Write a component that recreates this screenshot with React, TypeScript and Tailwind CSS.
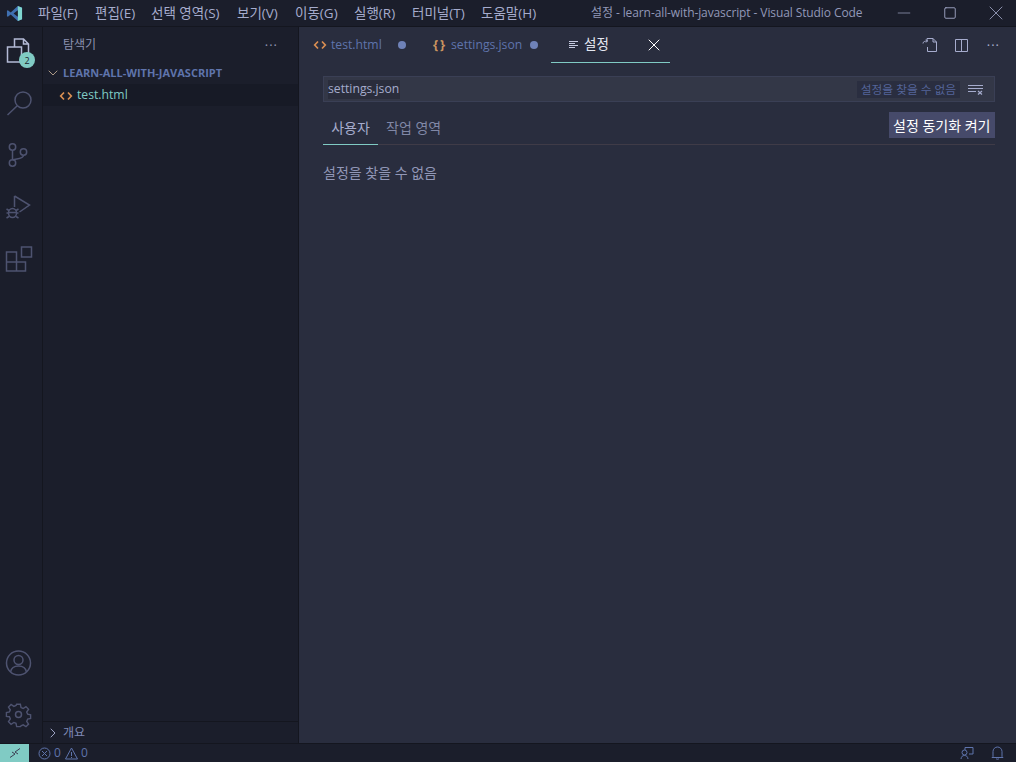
import { ChevronDown, ChevronRight, Minus, Square, X } from "lucide-react";

const menus = [
  ["파일(F)", "w-[57px]"],
  ["편집(E)", "w-[56px]"],
  ["선택 영역(S)", "w-[86px]"],
  ["보기(V)", "w-[58px]"],
  ["이동(G)", "w-[59px]"],
  ["실행(R)", "w-[58px]"],
  ["터미널(T)", "w-[69px]"],
  ["도움말(H)", "w-[70px]"],
];

const stroke = "#4e5370";

function ActivityIcon({ children, active }: { children: React.ReactNode; active?: boolean }) {
  return (
    <div className="flex h-[52px] w-[42px] items-center justify-start pl-[5px]">
      <svg width="29" height="28" viewBox="0 0 29 28" fill="none" stroke={active ? "#b4bad6" : stroke} strokeWidth="1.5">
        {children}
      </svg>
    </div>
  );
}

function HtmlIcon() {
  return (
    <svg width="14" height="14" viewBox="0 0 14 14" fill="none" stroke="#d98e52" strokeWidth="1.7" className="shrink-0">
      <path d="M5 3.500 1.700 7 5 10.500M9 3.500 12.300 7 9 10.500" />
    </svg>
  );
}

function Dot() {
  return <span className="block h-2 w-2 rounded-full bg-[#6f82b8]" />;
}

export default function App() {
  return (
    <div className="relative flex h-[762px] w-[1016px] flex-col overflow-hidden bg-[#292d3e] font-['Open_Sans','Noto_Sans_CJK_KR',sans-serif] text-[12px] text-[#a6accd]">
      {/* title bar */}
      <div className="flex h-[27px] shrink-0 items-center border-b border-[#14161f] bg-[#1b1e2b]">
        <div className="flex w-[28px] justify-center">
          <svg width="17" height="17" viewBox="0 0 18 18" fill="none">
            <path d="M12.500 1 17 3v12l-4.500 2L5 10l-3 2.500-1-.7V6.200l1-.7L5 8z" fill="#3f6fb0" />
            <path d="M12.500 1 17 3v12l-4.500 2z" fill="#7fd6d0" />
            <path d="M12.500 5.500v7L8 9z" fill="#1b1e2b" />
          </svg>
        </div>
        <nav className="flex text-[13.500px]">
          {menus.map(([label, width]) => (
            <span key={label} className={`${width} pl-[10px] whitespace-nowrap text-[#a6accd]`}>
              {label}
            </span>
          ))}
        </nav>
        <span className="ml-[50px] whitespace-nowrap tracking-[-0.1px] text-[#9298b8]">
          설정 - learn-all-with-javascript - Visual Studio Code
        </span>
        <div className="ml-auto flex items-center text-[#a6accd]">
          <span className="flex w-[46px] justify-center"><Minus size={20} strokeWidth={0.8} /></span>
          <span className="flex w-[46px] justify-center"><Square size={14} strokeWidth={1.500} /></span>
          <span className="ml-[3px] flex w-[40px] justify-center"><X size={24} strokeWidth={0.8} /></span>
        </div>
      </div>

      <div className="flex min-h-0 flex-1">
        {/* activity bar */}
        <aside className="flex w-[43px] shrink-0 flex-col border-r border-[#14161f] bg-[#1b1e2b] pb-[2px]">
          <div className="-mt-[2px]">
            <ActivityIcon active>
              <path d="M9.500 10V2h9l5 5v13h-7M18.500 2v5h5" />
              <path d="M2.500 10h14v15h-14z" />
            </ActivityIcon>
          </div>
          <ActivityIcon>
            <circle cx="18" cy="11" r="8" />
            <path d="M12 17 2.500 26" />
          </ActivityIcon>
          <ActivityIcon>
            <circle cx="7.500" cy="6" r="3.200" />
            <circle cx="7.500" cy="22" r="3.200" />
            <circle cx="18.500" cy="11" r="3.200" />
            <path d="M7.500 9.200v9.600M18.500 14.200c0 3.800-7 3.300-11 4.800" />
          </ActivityIcon>
          <ActivityIcon>
            <path d="M9.500 3 24.500 12l-10 7M9.500 3v11" />
            <ellipse cx="7.500" cy="20" rx="4" ry="4.500" />
            <path d="M1.500 16l2.500 1.500M1.500 20h2M1.500 25l2.500-1.500M13.500 16 11 17.500M13.500 20h-2M13.500 25 11 23.500M3.500 19.500h8" />
          </ActivityIcon>
          <ActivityIcon>
            <path d="M1.500 7h10v19h-10zM1.500 17h19v9h-9" />
            <path d="M16.500 2h10v10h-10z" />
          </ActivityIcon>
          <div className="mt-auto" />
          <ActivityIcon>
            <circle cx="13.500" cy="14" r="12" />
            <circle cx="13.500" cy="11" r="4.500" />
            <path d="M5.500 23c1-5 4-6 8-6s7 1 8 6" />
          </ActivityIcon>
          <ActivityIcon>
            <path d="M12 3h4l.7 3.500 2.300 1 3-2 2.800 2.800-2 3 1 2.300 3.200.700v4l-3.200.7-1 2.300 2 3-2.800 2.800-3-2-2.300 1L16 27h-4l-.7-3.500-2.300-1-3 2-2.800-2.800 2-3-1-2.300L1 16v-4l3.200-.7 1-2.300-2-3L6 3.200l3 2 2.300-1z" transform="translate(0.500 0.500) scale(.93)" />
            <circle cx="13.500" cy="13.500" r="3" />
          </ActivityIcon>
        </aside>

        {/* sidebar */}
        <aside className="flex w-[256px] shrink-0 flex-col border-r border-[#14161f] bg-[#1b1e2b]">
          <div className="flex h-[35px] shrink-0 items-center justify-between px-[20px] pt-[1px]">
            <span className="text-[12px] text-[#8c92b0]">탐색기</span>
            <span className="text-[13px] leading-none tracking-[1px] text-[#8c92b0]">···</span>
          </div>
          <div className="flex h-[22px] shrink-0 items-center pl-[2px] text-[11px] font-bold text-[#5f74ac]">
            <ChevronDown size={16} className="text-[#b9a48e]" strokeWidth={1.4} />
            <span className="ml-[2px]">LEARN-ALL-WITH-JAVASCRIPT</span>
          </div>
          <div className="flex h-[22px] shrink-0 items-center gap-[4px] bg-[#171a26] pt-[1px] pl-[16px] text-[12.200px] text-[#80cbc4]">
            <HtmlIcon />
            <span>test.html</span>
          </div>
          <div className="mt-auto flex h-[22px] shrink-0 items-center border-t border-[#14161f] pl-[2px] text-[12px] text-[#7f88b4]">
            <ChevronRight size={16} className="text-[#a6accd]" strokeWidth={1.4} />
            <span className="ml-[2px]">개요</span>
          </div>
        </aside>

        {/* editor */}
        <main className="flex min-w-0 flex-1 flex-col">
          <div className="flex h-[36px] shrink-0 items-stretch text-[12.200px]">
            <div className="flex w-[122px] items-center pl-[14px]">
              <HtmlIcon />
              <span className="ml-[4px] text-[#5f74ac]">test.html</span>
              <span className="ml-[16px]"><Dot /></span>
            </div>
            <div className="flex w-[130px] items-center pl-[12px]">
              <span className="w-[16px] text-[13px] font-bold tracking-[2px] whitespace-nowrap text-[#c99560]">{"{}"}</span>
              <span className="ml-[2px] text-[#5f74ac]">settings.json</span>
              <span className="ml-[8px]"><Dot /></span>
            </div>
            <div className="flex w-[119px] items-center border-b border-[#80cbc4] pl-[17px] text-white">
              <svg width="11" height="11" viewBox="0 0 11 11" stroke="#c5cae0" strokeWidth="1">
                <path d="M1 2.500h9M1 4.500h6M1 6.500h9M1 8.500h6" />
              </svg>
              <span className="ml-[5px] text-[13.500px] text-[#e4e7f2]">설정</span>
              <X size={20} className="ml-[35px] text-white" strokeWidth={1.2} />
            </div>
            <div className="ml-auto flex items-center pr-[16px] text-[#a6accd]">
              <svg width="16" height="16" viewBox="0 0 16 16" fill="none" stroke="#a6accd" strokeWidth="1">
                <path d="M5 4V1.500h6l3.500 3.500v9.500h-9V10M11 1.500V5h3.500M1 6.500C1 4.500 3 4 5.500 4M4 2.500 5.500 4 4 5.500" />
              </svg>
              <svg width="15" height="15" viewBox="0 0 15 15" fill="none" stroke="#a6accd" strokeWidth="1" className="ml-[16px]">
                <path d="M1.500 1.500h12v12h-12zM7.500 1.500v12" />
              </svg>
              <span className="ml-[18px] text-[13px] leading-none tracking-[1px]">···</span>
            </div>
          </div>

          <div className="flex flex-1 flex-col pt-[13px] pr-[21px] pl-[24px]">
            <div className="flex h-[26px] shrink-0 items-center border border-[#3a3f55] bg-[#333747] pt-[1px] pr-[11px] pl-[4px] text-[12.200px]">
              <span className="bg-[#2a2d3c] pr-[1px] text-[#a6accd]">settings.json</span>
              <span className="ml-auto bg-[#2a2e40] px-[4px] py-[1px] text-[11.700px] leading-[15px] text-[#54659a]">설정을 찾을 수 없음</span>
              <svg width="15" height="11" viewBox="0 0 15 11" className="ml-[8px]" stroke="#a6accd" strokeWidth="1" fill="none">
                <path d="M0 1.500h15M0 4.500h15M0 7.500h8" />
                <path d="m10 7 4 3.500M14 7l-4 3.500" strokeWidth="1.200" />
              </svg>
            </div>

            <div className="mt-[10px] flex h-[33px] shrink-0 items-stretch border-b border-[#3f3b47] text-[14px]">
              <span className="-mb-px flex w-[55px] items-center justify-center border-b border-[#80cbc4] pb-[2px] text-[#a6accd]">사용자</span>
              <span className="flex items-center pb-[2px] pl-[8px] text-[#8087a6]">작업 영역</span>
              <span className="mb-[6px] ml-auto flex h-[26px] items-center bg-[#464a6a] px-[4.500px] text-white">설정 동기화 켜기</span>
            </div>

            <p className="mt-[19px] text-[14px] leading-[18px] text-[#9298b8]">설정을 찾을 수 없음</p>
          </div>
        </main>
      </div>

      {/* status bar */}
      <footer className="flex h-[19px] shrink-0 items-center border-t border-[#14161f] bg-[#1b1e2b] text-[12px] text-[#5f74ac]">
        <div className="flex h-full w-[29px] items-center justify-center bg-[#80cbc4]">
          <svg width="12" height="12" viewBox="0 0 12 12" fill="none" stroke="#3b3d52" strokeWidth="1">
            <path d="M1 10.500 6 7 3 5M11 1.500 6 5l3 2" />
          </svg>
        </div>
        <div className="ml-[9px] flex items-center gap-[3px]">
          <svg width="13" height="13" viewBox="0 0 13 13" fill="none" stroke="#5f74ac">
            <circle cx="6.500" cy="6.500" r="5.500" />
            <path d="m4 4 5 5M9 4 4 9" />
          </svg>
          <span>0</span>
          <svg width="13" height="13" viewBox="0 0 13 13" fill="none" stroke="#5f74ac" className="ml-[1px]">
            <path d="M6.500 1 12.500 12H.5zM6.500 5v4M6.500 10v1" />
          </svg>
          <span>0</span>
        </div>
        <div className="ml-auto flex items-center gap-[17px] pr-[12px]">
          <svg width="14" height="14" viewBox="0 0 14 14" fill="none" stroke="#5f74ac">
            <path d="M5 4V1.500h8V8H9M1 13c.3-2.500 1.500-3.500 3.500-3.500S7.700 10.500 8 13" />
            <circle cx="4.500" cy="6.500" r="2.500" />
          </svg>
          <svg width="13" height="14" viewBox="0 0 13 14" fill="none" stroke="#5f74ac">
            <path d="M2 10.500V5.500a4.500 4.500 0 0 1 9 0v5l1 1H1zM5 12.500c.5 1 2.500 1 3 0" />
          </svg>
        </div>
      </footer>

      {/* explorer badge */}
      <div className="absolute top-[52px] left-[19px] flex h-[16px] w-[16px] items-center justify-center rounded-full bg-[#80cbc4] text-[9px] leading-none text-[#1b1e2b]">
        2
      </div>
    </div>
  );
}
